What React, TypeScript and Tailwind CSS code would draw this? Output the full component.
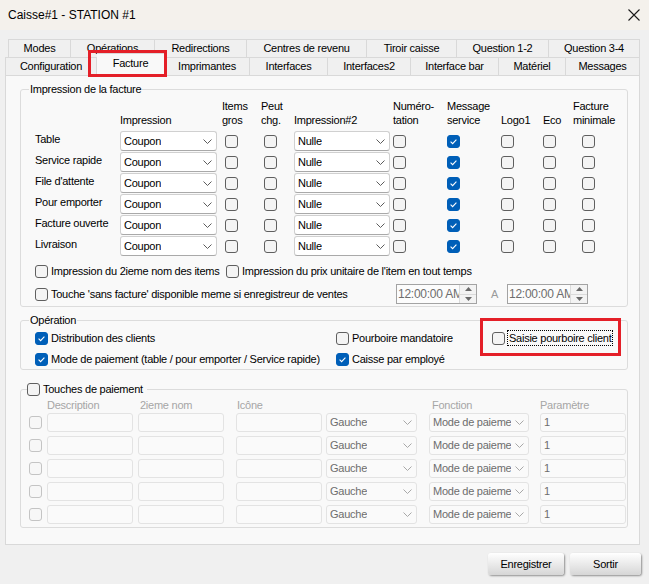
import React from "react";
import clsx from "clsx";

const ROWS = [
  "Table",
  "Service rapide",
  "File d'attente",
  "Pour emporter",
  "Facture ouverte",
  "Livraison",
];

const TABS_BACK = [
  { label: "Modes", w: "w-[63px]" },
  { label: "Opérations", w: "w-[84px]" },
  { label: "Redirections", w: "w-[92px]" },
  { label: "Centres de revenu", w: "w-[120px]" },
  { label: "Tiroir caisse", w: "w-[90px]" },
  { label: "Question 1-2", w: "w-[92px]" },
  { label: "Question 3-4", w: "w-[91px]" },
];

const TABS_FRONT = [
  { label: "Configuration", w: "w-[92px]" },
  { label: "Facture", w: "w-[68px]", active: true },
  { label: "Imprimantes", w: "w-[85px]" },
  { label: "Interfaces", w: "w-[78px]" },
  { label: "Interfaces2", w: "w-[83px]" },
  { label: "Interface bar", w: "w-[88px]" },
  { label: "Matériel", w: "w-[67px]" },
  { label: "Messages", w: "w-[74px]" },
];

const Check = ({
  checked = false,
  disabled = false,
  className,
}: {
  checked?: boolean;
  disabled?: boolean;
  className?: string;
}) => (
  <span
    className={clsx(
      "w-[13px] h-[13px] rounded-[3px] border flex items-center justify-center shrink-0",
      checked
        ? "bg-[#005fb8] border-[#005fb8]"
        : disabled
          ? "bg-[#f7f7f7] border-[#c4c4c4]"
          : "bg-[#f4f4f4] border-[#5f5f5f]",
      className,
    )}
  >
    {checked && (
      <svg width="9" height="9" viewBox="0 0 9 9" fill="none">
        <path d="M1.6 4.7 L3.6 6.6 L7.4 2.6" stroke="white" strokeWidth="1.1" />
      </svg>
    )}
  </span>
);

const Chevron = ({ muted = false }: { muted?: boolean }) => (
  <svg width="9" height="5" viewBox="0 0 9 5" fill="none" className="shrink-0">
    <path
      d="M0.5 0.5 L4.5 4.5 L8.5 0.5"
      stroke={muted ? "#a8a8a8" : "#5c5c5c"}
      strokeWidth="1"
    />
  </svg>
);

const Combo = ({
  value,
  w,
  disabled = false,
}: {
  value: string;
  w: string;
  disabled?: boolean;
}) => (
  <div
    className={clsx(
      "flex items-center justify-between rounded-[3px] border pl-[3px] pr-[4px] gap-[4px]",
      w,
      disabled
        ? "h-[19px] bg-[#fafafa] border-[#e3e3e3] text-[#6d6d6d]"
        : "h-[20px] bg-white border-[#d0d0d0] border-b-[#a9a9a9]",
    )}
  >
    <span className="overflow-hidden whitespace-nowrap">{value}</span>
    <Chevron muted={disabled} />
  </div>
);

const Field = ({ value = "" }: { value?: string }) => (
  <div className="w-[86px] h-[19px] bg-[#fafafa] border border-[#e3e3e3] rounded-[3px] pl-[3px] flex items-center text-[#6d6d6d]">
    {value}
  </div>
);

const TimeInput = () => (
  <div className="w-[81px] h-[20px] border border-[#a3a3a3] bg-[#fcfcfc] flex">
    <span className="flex-1 overflow-hidden whitespace-nowrap text-[#6d6d6d] text-[12px] leading-[18px] pl-[1px]">
      12:00:00 AM
    </span>
    <div className="w-[17px] flex flex-col border-l border-[#dadada] bg-[#f3f3f3]">
      <div className="flex-1 flex items-center justify-center border-b border-[#dadada]">
        <svg width="7" height="4" viewBox="0 0 7 4">
          <path d="M0 4 L3.5 0 L7 4 Z" fill="#6a6a6a" />
        </svg>
      </div>
      <div className="flex-1 flex items-center justify-center">
        <svg width="7" height="4" viewBox="0 0 7 4">
          <path d="M0 0 L3.5 4 L7 0 Z" fill="#6a6a6a" />
        </svg>
      </div>
    </div>
  </div>
);

const CheckLabel = ({
  checked = false,
  children,
}: {
  checked?: boolean;
  children: React.ReactNode;
}) => (
  <label className="flex items-center gap-[3px] whitespace-nowrap">
    <Check checked={checked} />
    <span>{children}</span>
  </label>
);

const GRID1 =
  "grid grid-cols-[85px_102px_39px_33px_99px_54px_54px_42px_30px_1fr] pl-[14px]";
const GRID3 =
  "grid grid-cols-[18px_91px_98px_90px_103px_111px_86px] pl-[8px] items-center";

const App = () => {
  return (
    <div className="relative w-[649px] h-[584px] bg-[#f0f0f0] flex flex-col overflow-hidden font-['Liberation_Sans',Arial,sans-serif] text-[11px] tracking-[-0.25px] text-black">
      {/* Title bar */}
      <div className="h-[30px] shrink-0 bg-[#f4f1ec] flex items-center justify-between pl-[8px] pr-[9px]">
        <span className="text-[12px] tracking-normal">Caisse#1 - STATION #1</span>
        <svg width="12" height="12" viewBox="0 0 12 12" fill="none">
          <path d="M0.5 0.5 L11.5 11.5 M11.5 0.5 L0.5 11.5" stroke="#1a1a1a" strokeWidth="1.1" />
        </svg>
      </div>

      {/* Tabs */}
      <div className="mt-[9px] flex h-[18px] ml-[8px]">
        {TABS_BACK.map((t, i) => (
          <div
            key={t.label}
            className={clsx(
              "h-full border-t border-r border-[#d9d9d9] flex items-center justify-center bg-[#f0f0f0]",
              i === 0 && "border-l",
              t.w,
            )}
          >
            {t.label}
          </div>
        ))}
      </div>
      <div className="flex h-[18px] ml-[5px] items-end">
        {TABS_FRONT.map((t, i) =>
          t.active ? (
            <div
              key={t.label}
              className={clsx(
                "relative top-[1px] z-10 h-[23px] bg-[#f9f9f9] border-t border-r border-[#d9d9d9] flex items-center justify-center pb-[3px]",
                t.w,
              )}
            >
              {t.label}
            </div>
          ) : (
            <div
              key={t.label}
              className={clsx(
                "h-full border-t border-r border-[#d9d9d9] flex items-center justify-center bg-[#f0f0f0]",
                i === 0 && "border-l",
                t.w,
              )}
            >
              {t.label}
            </div>
          ),
        )}
      </div>

      {/* Panel */}
      <div className="ml-[5px] w-[635px] h-[470px] bg-[#f9f9f9] border border-[#d9d9d9] pt-[6px] px-[14px]">
        {/* Impression de la facture */}
        <fieldset className="w-[608px] border border-[#dcdcdc] rounded-[3px] pb-[2px]">
          <legend className="ml-[8px] px-[1px] leading-[14px]">
            Impression de la facture
          </legend>
          <div className={clsx(GRID1, "h-[30px] items-end leading-[14px] mt-[1px]")}>
            <span />
            <span>Impression</span>
            <span>
              Items
              <br />
              gros
            </span>
            <span>
              Peut
              <br />
              chg.
            </span>
            <span>Impression#2</span>
            <span>
              Numéro-
              <br />
              tation
            </span>
            <span>
              Message
              <br />
              service
            </span>
            <span>Logo1</span>
            <span>Eco</span>
            <span>
              Facture
              <br />
              minimale
            </span>
          </div>
          <div className="mt-[4px] flex flex-col gap-[1px]">
            {ROWS.map((r) => (
              <div key={r} className={clsx(GRID1, "items-center h-[20px]")}>
                <span className="pb-[3px]">{r}</span>
                <Combo value="Coupon" w="w-[97px]" />
                <Check className="ml-[3px]" />
                <Check className="ml-[3px]" />
                <Combo value="Nulle" w="w-[96px]" />
                <Check />
                <Check checked />
                <Check />
                <Check />
                <Check className="ml-[9px]" />
              </div>
            ))}
          </div>
          <div className="mt-[5px] h-[20px] flex items-center pl-[14px]">
            <div className="w-[191px]">
              <CheckLabel>Impression du 2ieme nom des items</CheckLabel>
            </div>
            <CheckLabel>
              Impression du prix unitaire de l'item en tout temps
            </CheckLabel>
          </div>
          <div className="mt-[3px] h-[20px] flex items-center pl-[14px]">
            <div className="w-[361px]">
              <CheckLabel>
                Touche 'sans facture' disponible meme si enregistreur de ventes
              </CheckLabel>
            </div>
            <TimeInput />
            <span className="ml-[14px] w-[16px] text-[#9a9a9a]">A</span>
            <TimeInput />
          </div>
        </fieldset>

        {/* Opération */}
        <fieldset className="mt-[6px] w-[608px] border border-[#dcdcdc] rounded-[3px] pb-[1px]">
          <legend className="ml-[8px] px-[1px] leading-[14px]">Opération</legend>
          <div className="grid grid-cols-[301px_156px_1fr] pl-[14px] pt-[2px] gap-y-[3px]">
            <div className="h-[18px] flex items-center">
              <CheckLabel checked>Distribution des clients</CheckLabel>
            </div>
            <div className="h-[18px] flex items-center">
              <CheckLabel>Pourboire mandatoire</CheckLabel>
            </div>
            <div className="h-[18px] flex items-center">
              <label className="flex items-center gap-[2px] whitespace-nowrap">
                <Check />
                <span className="border border-dotted border-black px-[1px] leading-[14px]">
                  Saisie pourboire client
                </span>
              </label>
            </div>
            <div className="h-[18px] flex items-center">
              <CheckLabel checked>
                Mode de paiement (table / pour emporter / Service rapide)
              </CheckLabel>
            </div>
            <div className="h-[18px] flex items-center">
              <CheckLabel checked>Caisse par employé</CheckLabel>
            </div>
          </div>
        </fieldset>

        {/* Touches de paiement */}
        <fieldset className="mt-[12px] w-[608px] border border-[#dcdcdc] rounded-[3px] pb-[3px]">
          <legend className="ml-[6px] pr-[4px] leading-[14px]">
            <span className="flex items-center gap-[3px]">
              <Check />
              <span>Touches de paiement</span>
            </span>
          </legend>
          <div className={clsx(GRID3, "h-[14px] mt-[1px] text-[#a6a6a6]")}>
            <span />
            <span>Description</span>
            <span className="pl-[2px]">2ieme nom</span>
            <span className="pl-[1px]">Icône</span>
            <span />
            <span className="pl-[3px]">Fonction</span>
            <span>Paramètre</span>
          </div>
          <div className="mt-[2px] flex flex-col gap-[4px]">
            {[0, 1, 2, 3, 4].map((i) => (
              <div key={i} className={GRID3}>
                <Check disabled />
                <Field />
                <Field />
                <Field />
                <Combo value="Gauche" w="w-[91px]" disabled />
                <Combo value="Mode de paiement" w="w-[100px]" disabled />
                <Field value="1" />
              </div>
            ))}
          </div>
        </fieldset>
      </div>

      {/* Buttons */}
      <div className="mt-[8px] flex justify-end gap-[6px] pr-[8px]">
        <button className="w-[76px] h-[22px] rounded-[3px] bg-gradient-to-b from-[#ffffff] to-[#d6d6d6] shadow-[1px_1px_2px_rgba(0,0,0,0.4)] text-[11px]">
          Enregistrer
        </button>
        <button className="w-[71px] h-[22px] rounded-[3px] bg-gradient-to-b from-[#ffffff] to-[#d6d6d6] shadow-[1px_1px_2px_rgba(0,0,0,0.4)] text-[11px]">
          Sortir
        </button>
      </div>

      {/* Annotation boxes */}
      <div className="absolute left-[88px] top-[50px] w-[79px] h-[27px] border-[3px] border-[#e41f28] z-20" />
      <div className="absolute left-[480px] top-[318px] w-[141px] h-[38px] border-[3px] border-[#e41f28] z-20" />
    </div>
  );
};

export default App;
